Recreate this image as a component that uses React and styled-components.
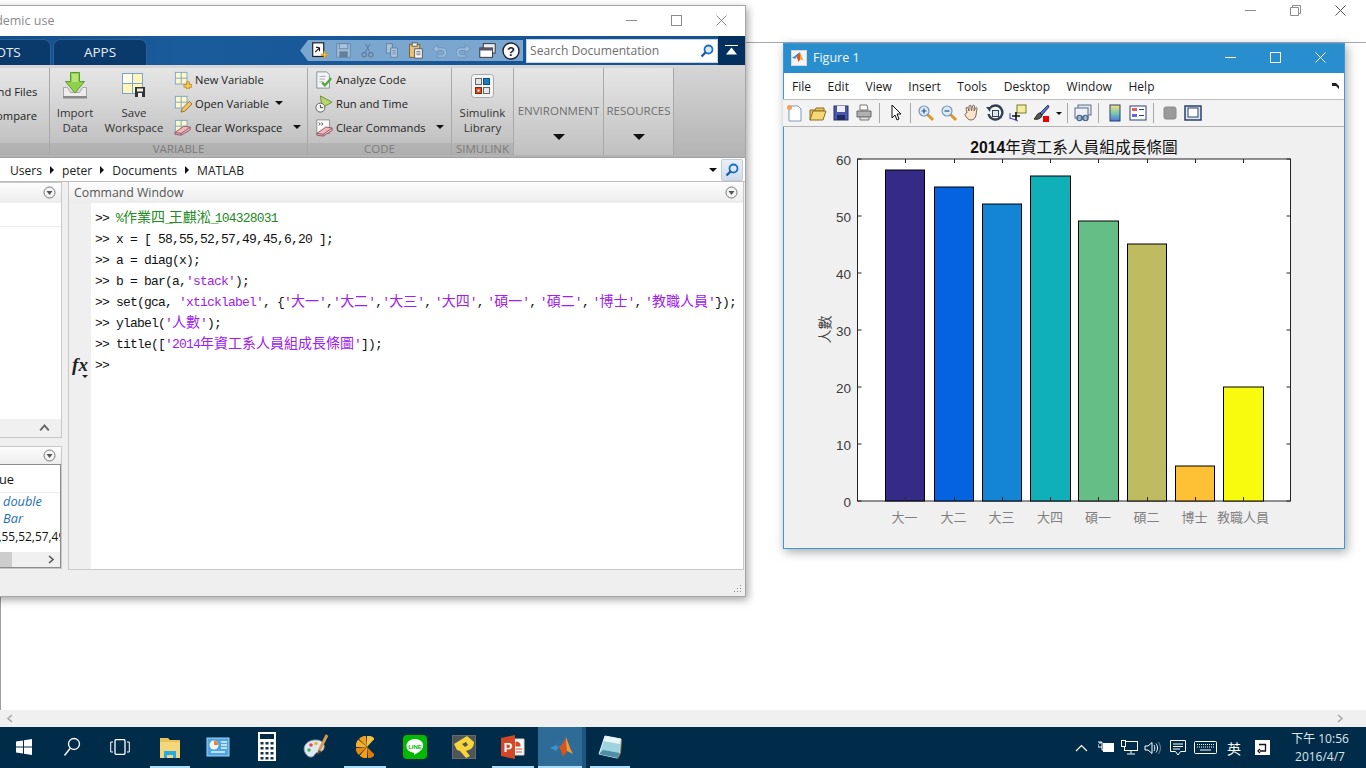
import styled, { createGlobalStyle } from 'styled-components';

const UI = `"Open Sans", "Noto Sans CJK TC", sans-serif`;
const CJK = `"Noto Sans CJK TC", sans-serif`;

const Global = createGlobalStyle`
	html, body {
		margin: 0;
		padding: 0;
		overflow: hidden;
		background: #fff;
		font-family: ${UI};
	}
`;

/* desktop behind everything */
const Page = styled.div`
	position: relative;
	width: 1366px;
	height: 768px;
	overflow: hidden;
	display: flex;
	flex-direction: column;
`;
const BackWindow = styled.div`
	flex: 1;
	display: flex;
	flex-direction: column;
	min-height: 0;
`;
const BackTitle = styled.div`
	height: 43px;
	box-sizing: border-box;
	border-bottom: 1px solid #a8a8a8;
	display: flex;
	justify-content: flex-end;
	padding-right: 3px;
`;
const BackBody = styled.div`
	flex: 1;
	border-left: 1px solid #a0a0a0;
`;
const HScroll = styled.div`
	height: 17px;
	background: #f0f0f0;
	display: flex;
	justify-content: space-between;
	align-items: center;
	padding: 0 22px 0 6px;
	color: #a8a8a8;
`;
const Taskbar = styled.div`
	height: 41px;
	background: #002c4a;
	display: flex;
	align-items: stretch;
	color: #fff;
`;
const TaskItem = styled.div`
	width: ${(p) => p.$w || 48}px;
	margin-right: ${(p) => p.$mr || 0}px;
	display: flex;
	align-items: center;
	justify-content: center;
	position: relative;
	background: ${(p) => (p.$active ? 'linear-gradient(90deg, #2f6b97 44px, #1f5680 44px)' : 'transparent')};
	box-sizing: border-box;
	padding-bottom: 2px;

	&::after {
		content: '';
		display: ${(p) => (p.$running ? 'block' : 'none')};
		position: absolute;
		bottom: 0;
		height: 2px;
		left: ${(p) => (p.$active ? 0 : 4)}px;
		right: 4px;
		background: #a9dcf6;
	}
`;
const Tray = styled.div`
	margin-left: auto;
	display: flex;
	align-items: center;
	padding-right: 17px;
`;
const TraySlot = styled.div`
	width: ${(p) => p.$w}px;
	display: flex;
	justify-content: center;
	align-items: center;
	font-family: ${CJK};
	font-size: 14px;
`;
const Clock = styled.div`
	width: 58px;
	text-align: center;
	font-size: 12px;
	line-height: 18px;
	margin-left: 16px;
	color: #dfe6ea;
	white-space: nowrap;
	font-family: "Open Sans", ${CJK};
`;

/* shared window chrome */
const WinBtn = styled.div`
	width: 45px;
	height: ${(p) => p.$h || 30}px;
	display: flex;
	align-items: center;
	justify-content: center;
`;

/* MATLAB desktop */
const MatlabWindow = styled.div`
	position: absolute;
	left: -200px;
	top: 5px;
	width: 946px;
	height: 592px;
	box-sizing: border-box;
	border: 1px solid #a6a6a6;
	background: #efefef;
	box-shadow: 2px 3px 8px rgba(0, 0, 0, 0.35);
	display: flex;
	flex-direction: column;
`;
const TitleBar = styled.div`
	height: 30px;
	box-sizing: border-box;
	padding: 0 1px 2px 0;
	background: #fff;
	display: flex;
	align-items: center;
	flex-shrink: 0;
`;
const TitleText = styled.div`
	margin-left: 68px;
	font-size: 12.5px;
	color: #8b8b8b;
	margin-right: auto;
	white-space: nowrap;
`;
const Strip = styled.div`
	height: 29px;
	flex-shrink: 0;
	display: flex;
	align-items: flex-end;
	padding-left: 149px;
	background: linear-gradient(100deg, #0c4278 0%, #1a5b9c 40%, #14528f 100%);
`;
const Tab = styled.div`
	width: ${(p) => p.$w}px;
	height: 26px;
	margin-right: 2px;
	box-sizing: border-box;
	padding-bottom: 2px;
	border: 1px solid #2c6197;
	border-bottom: none;
	border-radius: 7px 7px 0 0;
	background: #0a3a6c;
	color: #e6eef6;
	font-size: 13.5px;
	display: flex;
	align-items: center;
	justify-content: center;
`;
const Quick = styled.div`
	margin-left: auto;
	width: 223px;
	height: 21px;
	align-self: center;
	background: #7ba6cf;
	clip-path: polygon(8px 0, 100% 0, 100% 100%, 8px 100%, 0 50%);
	display: flex;
	align-items: center;
	padding-left: 7px;
	box-sizing: border-box;
`;
const QuickBtn = styled.div`
	width: 24px;
	display: flex;
	justify-content: center;
	opacity: ${(p) => (p.$off ? 0.38 : 1)};
`;
const SearchBox = styled.div`
	width: 192px;
	height: 24px;
	align-self: center;
	margin-left: 3px;
	background: #fff;
	border: 1px solid #c8d6e4;
	box-sizing: border-box;
	display: flex;
	align-items: center;
	justify-content: space-between;
	padding: 0 3px 0 3px;
	font-size: 12.1px;
	color: #6e6e6e;
	white-space: nowrap;
`;
const Collapse = styled.div`
	width: 27px;
	align-self: stretch;
	background: #03305f;
	display: flex;
	align-items: center;
	justify-content: center;
`;
const Ribbon = styled.div`
	height: 93px;
	flex-shrink: 0;
	display: flex;
	background: linear-gradient(#d6d6d6, #b3b3b3);
	border-bottom: 1px solid #a0a0a0;
	box-sizing: border-box;
`;
const Section = styled.div`
	width: ${(p) => p.$w}px;
	box-sizing: border-box;
	border-right: 1px solid #a8a8a8;
	margin-top: 3px;
	margin-bottom: 2px;
	display: flex;
	flex-direction: column;
	background: linear-gradient(#e6e6e6, #bcbcbc);
`;
const SectionBody = styled.div`
	height: 75px;
	display: flex;
	padding-left: ${(p) => p.$pl || 0}px;
	padding-top: ${(p) => p.$pt || 0}px;
	box-sizing: border-box;
`;
const SectionLabel = styled.div`
	height: 12px;
	background: rgba(0, 0, 0, 0.07);
	text-align: center;
	color: #7c7c7c;
	font-size: 11.5px;
	line-height: 12px;
	white-space: nowrap;
`;
const BigBtn = styled.div`
	width: ${(p) => p.$w}px;
	display: flex;
	flex-direction: column;
	align-items: center;
	font-size: 11.5px;
	line-height: 15px;
	color: #333;
	text-align: center;
	white-space: nowrap;
`;
const BigIcon = styled.div`
	height: 33px;
	margin-bottom: 3px;
	margin-top: 1px;
	display: flex;
	align-items: center;
`;
const RowList = styled.div`
	display: flex;
	flex-direction: column;
	margin-left: ${(p) => p.$ml || 0}px;
	margin-top: -1px;
`;
const RibbonRow = styled.div`
	height: 24px;
	display: flex;
	align-items: center;
	font-size: 11.2px;
	color: #222;
	white-space: nowrap;
`;
const RowIcon = styled.div`
	width: 21px;
	display: flex;
	flex-shrink: 0;
	margin-top: 1px;
`;
const Caret = styled.span`
	display: inline-block;
	width: 0;
	height: 0;
	margin-left: ${(p) => (p.$auto ? 'auto' : `${p.$ml || 0}px`)};
	border-left: ${(p) => p.$s || 4}px solid transparent;
	border-right: ${(p) => p.$s || 4}px solid transparent;
	border-top: ${(p) => p.$s || 4}px solid #111;
`;
const MenuSection = styled.div`
	width: ${(p) => p.$w}px;
	box-sizing: border-box;
	border-right: 1px solid #a8a8a8;
	margin: 3px 0 2px;
	padding-top: 35px;
	display: flex;
	flex-direction: column;
	align-items: center;
	gap: 16px;
	font-size: 11.5px;
	line-height: 15px;
	color: #6f6f6f;
	white-space: nowrap;
	background: linear-gradient(#e6e6e6, #c0c0c0);
`;
const PathBar = styled.div`
	height: 24px;
	flex-shrink: 0;
	background: #fff;
	border-bottom: 1px solid #bdbdbd;
	box-sizing: border-box;
	display: flex;
	align-items: center;
	padding-left: 209px;
	padding-right: 2px;
	font-size: 12.1px;
	color: #222;
`;
const PathText = styled.span`
	position: relative;
	top: 1px;
`;
const PathArrow = styled.span`
	width: 0;
	height: 0;
	margin: 0 8px;
	border-top: 4px solid transparent;
	border-bottom: 4px solid transparent;
	border-left: 4px solid #111;
`;
const PathSearch = styled.div`
	width: 22px;
	height: 22px;
	box-sizing: border-box;
	margin-left: 4px;
	border: 1px solid #c4ccd6;
	border-radius: 2px;
	background: linear-gradient(#e9eff8, #cfdcee);
	display: flex;
	align-items: center;
	justify-content: center;
`;
const Desk = styled.div`
	height: 388px;
	flex-shrink: 0;
	display: flex;
	gap: 6px;
	padding-right: 1px;
`;
const LeftColumn = styled.div`
	width: 261px;
	display: flex;
	flex-direction: column;
	gap: 8px;
`;
const Panel = styled.div`
	flex: none;
	display: flex;
	flex-direction: column;
	border: 1px solid #c8c8c8;
	border-left: none;
	box-sizing: border-box;
	height: ${(p) => p.$h}px;
`;
const PanelHead = styled.div`
	height: ${(p) => p.$h || 20}px;
	flex-shrink: 0;
	background: linear-gradient(#fdfdfd, #ececec);
	display: flex;
	align-items: center;
	justify-content: space-between;
	padding: 0 5px 1px 5px;
	box-sizing: border-box;
	font-size: 12.3px;
	color: #555;
`;
const FolderList = styled.div`
	flex: 1;
	background: #fff;
	display: flex;
	flex-direction: column;
`;
const ListHead = styled.div`
	height: 23px;
	border-bottom: 1px solid #ececec;
`;
const ScrollEnd = styled.div`
	height: 18px;
	background: #f0f0f0;
	display: flex;
	justify-content: flex-end;
	align-items: center;
	padding-right: 11px;
`;
const VarTable = styled.div`
	flex: 1;
	background: #fff;
	border: 1px solid #8c8c8c;
	border-left: none;
	display: flex;
	flex-direction: column;
	overflow: hidden;
	font-size: 12.8px;
	color: #111;
`;
const VarHead = styled.div`
	height: 28px;
	box-sizing: border-box;
	border-bottom: 1px solid #ececec;
	padding-left: 180px;
	line-height: 29px;
`;
const VarRow = styled.div`
	height: 17.3px;
	line-height: 17.3px;
	padding-left: ${(p) => p.$pl}px;
	white-space: nowrap;
	font-size: ${(p) => p.$fs || 12.8}px;
	font-style: ${(p) => (p.$italic ? 'italic' : 'normal')};
	color: ${(p) => (p.$italic ? '#1f6fb5' : '#111')};
`;
const VarScroll = styled.div`
	margin-top: auto;
	height: 15px;
	background: #f0f0f0;
	display: flex;
	align-items: center;
	justify-content: space-between;
	padding-right: 5px;
`;
const VarThumb = styled.div`
	width: 211px;
	height: 100%;
	background: #cdcdcd;
`;
const CommandPanel = styled.div`
	flex: 1;
	display: flex;
	flex-direction: column;
	border: 1px solid #c8c8c8;
	border-top: none;
	min-width: 0;
`;
const CommandBody = styled.div`
	flex: 1;
	display: flex;
	min-height: 0;
`;
const Gutter = styled.div`
	width: 22px;
	flex-shrink: 0;
	background: #efefef;
	padding-top: 151px;
	box-sizing: border-box;
	display: flex;
	flex-direction: column;
	align-items: center;
`;
const FxMark = styled.div`
	font-family: "Liberation Serif", serif;
	font-style: italic;
	font-weight: bold;
	font-size: 19px;
	line-height: 22px;
	color: #222;
	position: relative;
`;
const FxCaret = styled.span`
	position: absolute;
	right: 0;
	bottom: -2px;
	width: 0;
	height: 0;
	border-left: 3px solid transparent;
	border-right: 3px solid transparent;
	border-top: 3px solid #222;
`;
const Console = styled.div`
	flex: 1;
	background: #fff;
	padding: 5px 0 0 4px;
	font-family: "Liberation Mono", monospace;
	font-size: 13px;
	letter-spacing: -0.8px;
	color: #111;
	white-space: pre;
	overflow: hidden;
`;
const Line = styled.div`
	height: 21px;
	line-height: 21px;
`;
const Str = styled.span`
	color: #a020f0;
`;
const Comment = styled.span`
	color: #228b22;
`;
const Han = styled.span`
	font-family: ${CJK};
	font-size: 14px;
	letter-spacing: 0;
	line-height: 14px;
`;
/* double-width runs sit tighter around their separators in the console */
const Tight = styled.span`
	letter-spacing: ${(p) => p.$by || -4.3}px;
`;
const StatusBar = styled.div`
	flex: 1;
	display: flex;
	justify-content: flex-end;
	align-items: flex-end;
	padding: 0 3px 2px 0;
`;

/* figure window */
const FigureWindow = styled.div`
	position: absolute;
	left: 783px;
	top: 43px;
	width: 562px;
	height: 506px;
	box-sizing: border-box;
	border: 1px solid #3a9ad9;
	background: #f0f0f0;
	box-shadow: 2px 3px 10px rgba(0, 0, 0, 0.35);
	display: flex;
	flex-direction: column;
`;
const FigTitle = styled.div`
	height: 29px;
	flex-shrink: 0;
	box-sizing: border-box;
	padding-bottom: 2px;
	background: #288ecd;
	color: #f2f8fc;
	display: flex;
	align-items: center;
	font-size: 12.5px;
`;
const FigIcon = styled.div`
	width: 14px;
	height: 14px;
	margin: 0 6px 0 7px;
	background: #f4f4f4;
	display: flex;
	border: 1px solid #d8d8d8;
`;
const FigButtons = styled.div`
	margin-left: auto;
	display: flex;
	margin-right: 1px;
`;
const MenuBar = styled.div`
	height: 26px;
	flex-shrink: 0;
	background: #fff;
	display: flex;
	align-items: center;
	gap: 16.6px;
	padding: 0 4px 0 8px;
	font-size: 12px;
	color: #1a1a1a;
`;
const MenuEnd = styled.div`
	margin-left: auto;
	display: flex;
`;
const FigTools = styled.div`
	height: 28px;
	flex-shrink: 0;
	box-sizing: border-box;
	background: #f3f3f3;
	border-top: 1px solid #bdbdbd;
	border-bottom: 1px solid #b4b4b4;
	display: flex;
	align-items: center;
	margin-left: -1px;
`;
const ToolBtn = styled.div`
	width: 23px;
	display: flex;
	justify-content: center;
`;
const ToolSep = styled.div`
	width: 1px;
	height: 20px;
	margin: 0 ${(p) => p.$r ?? 4}px 0 ${(p) => p.$l ?? 4}px;
	background: #a8a8a8;
`;
const ChartSvg = styled.svg`
	display: block;
	flex: 1;
	width: 100%;
	min-height: 0;
`;

/* ---------- icons ---------- */
const S = ({ s = 18, v = 20, children }) => (
	<svg width={s} height={s} viewBox={`0 0 ${v} ${v}`} style={{ display: 'block' }}>
		{children}
	</svg>
);
const Grid = () => (
	<g>
		<rect x="1.5" y="1.5" width="13" height="13" fill="#fdf6c5" stroke="#7ba3cb" />
		<path d="M8 1.5v13M1.5 8h13" stroke="#7ba3cb" fill="none" />
	</g>
);
const Eraser = ({ x = 0, y = 0 }) => (
	<g transform={`translate(${x} ${y})`}>
		<path d="M1 15l10-7 7 1 0 3-10 6-7-1z" fill="#f0b8bd" stroke="#8a5560" />
		<path d="M1 15l7 1 10-7M8 16v2" fill="none" stroke="#8a5560" />
	</g>
);
const NewVar = () => (
	<S>
		<Grid />
		<path d="M11 15h3v-3h3v3h3v3h-3v2h-3v-2h-3z" fill="#f5c94c" stroke="#b07f1d" strokeWidth=".8" />
	</S>
);
const OpenVar = () => (
	<S>
		<Grid />
		<path d="M8 19l1-4 8-8 3 3-8 8z" fill="#f2c26a" stroke="#8b6a2d" />
	</S>
);
const ClearVar = () => (
	<S>
		<Grid />
		<Eraser />
	</S>
);
const Analyze = () => (
	<S>
		<path d="M2 1h11l3 3v15H2z" fill="#f4f4f4" stroke="#7e8b93" />
		<path d="M5 6h7M5 9h6M5 12h4" stroke="#a0aab0" />
		<path d="M8 13l3 3 7-8" fill="none" stroke="#57a33c" strokeWidth="2.6" />
	</S>
);
const RunTime = () => (
	<S>
		<path d="M6 1l13 7-11 6z" fill="#b9d56b" stroke="#668a2d" />
		<circle cx="6" cy="14" r="5" fill="#f4f4f4" stroke="#555" />
		<path d="M6 11v3h3" fill="none" stroke="#333" />
	</S>
);
const ClearCmd = () => (
	<S>
		<rect x="2" y="1" width="14" height="15" fill="#fafafa" stroke="#8c8c8c" />
		<path d="M4 4l2 1.5L4 7M7 4l2 1.5L7 7" fill="none" stroke="#333" strokeWidth=".8" />
		<Eraser x="1" y="1" />
	</S>
);
const ImportIcon = () => (
	<svg width="24" height="27" viewBox="0 0 24 27">
		<path d="M.5 15.5h4l3 5h9l3-5h4v10h-23z" fill="#ececec" stroke="#a8a8a8" />
		<rect x="0" y="24" width="24" height="2.5" fill="#8a8a8a" />
		<path d="M7.5.5h9v9h5L12 21 2.5 9.5h5z" fill="#8fd14a" stroke="#5c9a28" />
		<rect x="9" y="2" width="6" height="8" fill="#b6e57c" />
	</svg>
);
const SaveIcon = () => (
	<svg width="24" height="25" viewBox="0 0 24 25">
		<rect x=".5" y=".5" width="20" height="20" fill="#fdf6bf" stroke="#7ba3cb" />
		<rect x="1" y="1" width="9" height="9" fill="#fffde8" />
		<path d="M10.5.5v20M.5 10.5h20" stroke="#7ba3cb" />
		<rect x="13" y="14" width="10" height="10" fill="#333" />
		<rect x="15" y="15.5" width="6" height="3" fill="#eee" />
		<rect x="16" y="20" width="4" height="4" fill="#eee" />
	</svg>
);
const SimulinkIcon = () => (
	<svg width="23" height="24" viewBox="0 0 23 24">
		<rect x=".5" y=".5" width="22" height="23" rx="3" fill="#f4f4f4" stroke="#a9a9a9" />
		<rect x="4.5" y="4.5" width="6" height="6" fill="#e4e4e4" stroke="#666" />
		<rect x="12.5" y="4.5" width="6" height="6" fill="#1c7cc0" stroke="#0d4f80" />
		<rect x="4.5" y="13.5" width="6" height="6" fill="#d8481f" stroke="#7d2a10" />
		<rect x="12.5" y="13.5" width="6" height="6" fill="#e8e8e8" stroke="#666" />
		<rect x="6.5" y="15.5" width="2" height="2" fill="#fff" />
	</svg>
);
const Magnifier = ({ s = 14 }) => (
	<svg width={s} height={s} viewBox="0 0 14 14">
		<circle cx="8.5" cy="5.5" r="4" fill="#dbeaf8" stroke="#1c6ec0" strokeWidth="1.8" />
		<path d="M5.5 8.5L1.5 12.5" stroke="#1c5ea6" strokeWidth="2.4" />
	</svg>
);
const PanelArrow = () => (
	<svg width="13" height="13" viewBox="0 0 13 13">
		<circle cx="6.5" cy="6.5" r="5.5" fill="#f4f4f4" stroke="#777" />
		<path d="M3.5 5h6l-3 4z" fill="#555" />
	</svg>
);
const CloseGlyph = ({ c }) => (
	<svg width="11" height="11" viewBox="0 0 11 11">
		<path d="M.5.5l10 10M10.5.5l-10 10" stroke={c} fill="none" />
	</svg>
);
const MaxGlyph = ({ c }) => (
	<svg width="11" height="11" viewBox="0 0 11 11">
		<rect x=".5" y=".5" width="10" height="10" stroke={c} fill="none" />
	</svg>
);
const MinGlyph = ({ c }) => (
	<svg width="11" height="11" viewBox="0 0 11 11">
		<path d="M0 5.5h11" stroke={c} fill="none" />
	</svg>
);
const RestoreGlyph = ({ c }) => (
	<svg width="11" height="11" viewBox="0 0 11 11">
		<path d="M.5 2.5h8v8h-8zM2.5 2.5v-2h8v8h-2" stroke={c} fill="none" />
	</svg>
);
const Chevron = ({ d, c = '#a8a8a8', s = 9 }) => (
	<svg width={s} height={s} viewBox="0 0 9 9">
		<path d={d} stroke={c} strokeWidth="1.6" fill="none" />
	</svg>
);
const MatlabPeak = ({ s = 24 }) => (
	<svg width={s} height={s} viewBox="0 0 24 24">
		<path d="M0 13l6-3 3 2-3 4z" fill="#3d8fd0" />
		<path d="M6 10l3 2 4-4 3-6-5 4z" fill="#2c6fa8" />
		<path d="M9 12c2 3 3 7 4 10l4-6c-1-5-1-10-1-14-2 5-4 8-7 10z" fill="#d8541e" />
		<path d="M16 2c2 5 4 12 7 17-2-1-4-2-6-3-1-5-1-10-1-14z" fill="#f29a2b" />
	</svg>
);
const QuickNew = () => (
	<S s={17}>
		<rect x="2" y="1" width="13" height="16" fill="#fff" stroke="#222" strokeWidth="1.4" />
		<path d="M5 12l5-5M6 6l4 1 0 4" stroke="#111" strokeWidth="1.3" fill="none" />
		<path d="M12 14h3v-3h2v3h3v2h-3v3h-2v-3h-3z" fill="#f5c94c" stroke="#b07f1d" strokeWidth=".6" />
	</S>
);
const QuickSave = () => (
	<S s={17}>
		<path d="M2 2h16v16H2z" fill="#dfe6ee" stroke="#3a4450" />
		<rect x="5" y="2" width="10" height="6" fill="#f4f4f4" stroke="#3a4450" />
		<rect x="5" y="11" width="10" height="7" fill="#3a4450" />
	</S>
);
const QuickCut = () => (
	<S s={17}>
		<circle cx="6" cy="15" r="2.6" fill="none" stroke="#334" strokeWidth="1.3" />
		<circle cx="14" cy="15" r="2.6" fill="none" stroke="#334" strokeWidth="1.3" />
		<path d="M7 13l6-11M13 13L8 2" stroke="#334" strokeWidth="1.1" />
	</S>
);
const QuickCopy = () => (
	<S s={17}>
		<path d="M4 2h7v11H4z" fill="#eee" stroke="#334" />
		<path d="M9 7h8v11H9z" fill="#f6f6f6" stroke="#334" />
		<path d="M11 10h4M11 12h4M11 14h4" stroke="#667" />
	</S>
);
const QuickPaste = () => (
	<S s={17}>
		<rect x="3" y="3" width="12" height="15" fill="#e8c27a" stroke="#7a5a20" />
		<rect x="6" y="1" width="6" height="4" fill="#eee" stroke="#555" />
		<path d="M9 8h9v11H9z" fill="#fff" stroke="#444" />
		<path d="M11 11h5M11 13h5M11 15h5" stroke="#667" />
	</S>
);
const QuickUndo = ({ flip }) => (
	<S s={17}>
		<g transform={flip ? 'translate(20 0) scale(-1 1)' : undefined}>
			<path d="M8 3L2 8l6 5v-3h5c3 0 3 5 0 5H7v3h7c6 0 6-11 0-11H8z" fill="#cfdded" stroke="#4d6b8a" />
		</g>
	</S>
);
const QuickWindows = () => (
	<S s={17}>
		<rect x="5" y="2" width="14" height="11" fill="#eee" stroke="#222" />
		<rect x="1" y="7" width="15" height="11" fill="#fff" stroke="#222" />
		<rect x="1" y="7" width="15" height="3" fill="#556" />
	</S>
);
const QuickHelp = () => (
	<svg width="18" height="18" viewBox="0 0 18 18">
		<circle cx="9" cy="9" r="8" fill="#fff" stroke="#223" strokeWidth="1.4" />
		<text x="9" y="13.5" textAnchor="middle" fontSize="13" fontWeight="bold" fontFamily="Liberation Sans" fill="#223">?</text>
	</svg>
);

/* figure toolbar */
const T = ({ children }) => (
	<svg width="18" height="18" viewBox="0 0 18 18" style={{ display: 'block' }}>
		{children}
	</svg>
);
const Lens = ({ sign }) => (
	<T>
		<path d="M10 10l6 6" stroke="#d89a2a" strokeWidth="3" />
		<circle cx="7" cy="7" r="5" fill="#dcebfa" stroke="#7a96b8" strokeWidth="1.2" />
		<path d={sign === '+' ? 'M4.5 7h5M7 4.5v5' : 'M4.5 7h5'} stroke="#24507f" strokeWidth="1.2" />
	</T>
);
const FigTool = {
	New: () => (
		<T>
			<path d="M3 2h9l3 3v12H3z" fill="#fff" stroke="#7a9bc0" />
			<circle cx="3.5" cy="3.5" r="2.5" fill="#f0a050" />
		</T>
	),
	Open: () => (
		<T>
			<path d="M1 6h5l1-2h8v3H5L2 16H1z" fill="#e8c45a" stroke="#8c6d1f" />
			<path d="M4 7h13l-3 9H1z" fill="#f3d877" stroke="#8c6d1f" />
		</T>
	),
	Save: () => (
		<T>
			<rect x="2" y="2" width="14" height="14" fill="#4858ab" stroke="#28306b" />
			<rect x="5" y="2" width="8" height="6" fill="#eef" />
			<rect x="5" y="11" width="8" height="5" fill="#222a60" />
		</T>
	),
	Print: () => (
		<T>
			<path d="M5 1h7l1 5H5z" fill="#fff" stroke="#777" />
			<path d="M2 7h14v6H2z" fill="#b0b0b0" stroke="#666" />
			<path d="M5 13h9v3H5z" fill="#e0e0e0" stroke="#777" />
		</T>
	),
	Pointer: () => (
		<T>
			<path d="M5 1v13l3-3 2 5 2-1-2-5h4z" fill="#fff" stroke="#111" />
		</T>
	),
	Hand: () => (
		<T>
			<path d="M4 9L3 4c0-1 2-1 2 0l1 3 0-5c0-1 2-1 2 0l.5 5L9.5 2c0-1 2-1 2 0l-.5 5 1.5-3c.5-1 2-.5 1.5.5L13 11c-.5 3-2 5-5 5s-4-2-6-5c-.5-1 1-2 2-2z" fill="#fbe3cc" stroke="#7a6a5c" />
		</T>
	),
	Rotate: () => (
		<T>
			<path d="M4 4a7 7 0 11-1.5 6" fill="none" stroke="#333f52" strokeWidth="2.4" />
			<rect x="6.5" y="6.5" width="6" height="6" fill="#dfe8f2" stroke="#333f52" />
			<path d="M0 3l5 0-1 5z" fill="#333f52" />
		</T>
	),
	Cursor: () => (
		<T>
			<rect x="8" y="1" width="9" height="8" fill="#f2eda0" stroke="#7a7a30" />
			<path d="M1 9v6M1 14l8 3" stroke="#2a3fd0" fill="none" />
			<path d="M7 8v8M3 12h8" stroke="#111" strokeWidth="1.6" />
		</T>
	),
	Brush: () => (
		<T>
			<path d="M16 1L8 9l2 2 7-8z" fill="#5672c0" stroke="#2a3f80" />
			<path d="M8 9c-3 0-3 3-6 6 4 1 8-1 8-4z" fill="#555" stroke="#222" />
			<rect x="11" y="12" width="6" height="6" fill="#ee0000" />
		</T>
	),
	Link: () => (
		<T>
			<rect x="4" y="1" width="13" height="10" fill="#dde5ee" stroke="#5c6f85" />
			<rect x="1" y="4" width="13" height="10" fill="#eef2f6" stroke="#5c6f85" />
			<path d="M3 14a2.5 2.5 0 015 0 2.5 2.5 0 01-5 0M9 14a2.5 2.5 0 015 0 2.5 2.5 0 01-5 0" fill="none" stroke="#4a6b94" strokeWidth="1.4" />
		</T>
	),
	Colorbar: () => (
		<T>
			<defs>
				<linearGradient id="cb" x1="0" y1="0" x2="0" y2="1">
					<stop offset="0" stopColor="#f6e27a" />
					<stop offset=".5" stopColor="#7ec7b0" />
					<stop offset="1" stopColor="#4a78d8" />
				</linearGradient>
			</defs>
			<rect x="4" y="1" width="10" height="16" fill="url(#cb)" stroke="#2c3f6b" />
		</T>
	),
	Legend: () => (
		<T>
			<rect x="1" y="2" width="16" height="14" fill="#fff" stroke="#2c3f6b" />
			<rect x="3" y="4" width="5" height="3" fill="#e65a5a" />
			<rect x="3" y="10" width="5" height="3" fill="#5a6ae6" />
			<path d="M10 5.5h5M10 11.5h5" stroke="#2c3f6b" />
		</T>
	),
	Plain: () => (
		<T>
			<rect x="3" y="3" width="12" height="12" rx="2" fill="#9a9a9a" stroke="#8a8a8a" />
		</T>
	),
	Tile: () => (
		<T>
			<rect x="1" y="2" width="16" height="14" fill="#dfe8f2" stroke="#2c3f6b" strokeWidth="1.5" />
			<rect x="4" y="4" width="10" height="9" fill="#fff" stroke="#2c3f6b" />
		</T>
	),
};

/* taskbar */
const B = ({ children, w = 24, h = 24 }) => (
	<svg width={w} height={h} viewBox={`0 0 ${w} ${h}`} style={{ display: 'block' }}>
		{children}
	</svg>
);
const wedge = (a, b) => {
	const r = 11.5;
	const cx = 12;
	const cy = 11;
	const p = (t) => `${(cx + r * Math.cos((t * Math.PI) / 180)).toFixed(1)} ${(cy + r * Math.sin((t * Math.PI) / 180)).toFixed(1)}`;
	return `M${cx} ${cy}L${p(a)}A${r} ${r} 0 0 1 ${p(b)}z`;
};
const FAN = [
	[45, 85, '#d97b0e'],
	[90, 130, '#f2a01e'],
	[135, 175, '#e88a12'],
	[180, 220, '#f7b02c'],
	[225, 265, '#f0a020'],
	[270, 312, '#f5c04a'],
];
const TaskIcon = {
	Start: () => (
		<B w={16} h={16}>
			<path d="M0 2.5l7-1v6H0zM8 1.3L16 0v7.5H8zM0 8.5h7v6l-7-1zM8 8.5h8V16l-8-1.2z" fill="#fff" />
		</B>
	),
	Search: () => (
		<B w={18} h={20}>
			<circle cx="11" cy="7" r="5.5" fill="none" stroke="#fff" strokeWidth="1.3" />
			<path d="M7 11.5L1.5 18.5" stroke="#fff" strokeWidth="1.4" />
		</B>
	),
	View: () => (
		<B w={20} h={16}>
			<rect x="5" y=".7" width="10" height="14.6" rx="1" fill="none" stroke="#fff" strokeWidth="1.3" />
			<path d="M3 3H.7v10H3M17 3h2.3v10H17" fill="none" stroke="#fff" />
		</B>
	),
	Folder: () => (
		<B>
			<path d="M2 3h8l2 2h10v18H2z" fill="#e9c25a" />
			<rect x="2" y="7" width="20" height="16" fill="#f4d67c" />
			<path d="M6 23v-7h12v7h-3v-3H9v3z" fill="#29a8e6" />
		</B>
	),
	Panel: () => (
		<B>
			<rect x="1" y="3" width="22" height="18" fill="#4ea6e6" stroke="#a5d4f4" />
			<circle cx="8" cy="10" r="4.5" fill="#f4f4f4" />
			<path d="M8 10V5.5a4.5 4.5 0 014.5 4.5z" fill="#e8862a" />
			<path d="M15 7h6M15 10h6M15 13h6M5 17h14" stroke="#e6f3fc" strokeWidth="1.4" />
		</B>
	),
	Calc: () => (
		<B w={18} h={29}>
			<rect width="18" height="29" fill="#fff" />
			<rect x="2" y="2" width="14" height="5" fill="#002c4a" />
			{[10, 15, 20, 25].map((y) => (
				<path key={y} d={`M2.5 ${y}h3v2.5h-3zM7.5 ${y}h3v2.5h-3zM12.5 ${y}h3v2.5h-3z`} fill="#12344e" />
			))}
		</B>
	),
	Paint: () => (
		<B w={26} h={28}>
			<path d="M3 21C-2 14 4 7 13 7c7 0 10 6 7 10-3 3-6 1-8 4-2 4-6 4-9 0z" fill="#dfe9f2" stroke="#98a9b8" />
			<circle cx="8" cy="12" r="1.8" fill="#e24b3b" />
			<circle cx="13" cy="10.5" r="1.8" fill="#f0b42c" />
			<circle cx="6" cy="17" r="1.8" fill="#4caf50" />
			<path d="M16 18L24 2" stroke="#d99a54" strokeWidth="3" />
			<path d="M14 22l1.5-5 3 1.5z" fill="#6d4a2a" />
		</B>
	),
	Fan: () => (
		<B w={18} h={22}>
			{FAN.map(([a, b, c]) => (
				<path key={a} d={wedge(a, b)} fill={c} transform="translate(-1 0)" />
			))}
		</B>
	),
	Line: () => (
		<B>
			<rect width="24" height="24" rx="4" fill="#00b900" />
			<path d="M12 4C7 4 3.5 7 3.5 11c0 3.5 2.5 6 7 6.7 1 .2.8 1 .6 2.3 2.5-1.2 6-3.8 7.5-5.5 1-1.200 1.500-2.300 1.500-3.500C20.500 7 17 4 12 4z" fill="#fff" />
			<text x="12" y="13.5" textAnchor="middle" fontSize="6" fontWeight="bold" fontFamily="Liberation Sans" fill="#00b900">LINE</text>
		</B>
	),
	Gem: () => (
		<B>
			<rect width="24" height="24" rx="2" fill="#4f5456" stroke="#7a7f82" />
			<path d="M2 9L15 1l7 6c0 3-1 5-3 7l-5 2 4 5-4 2-6-7-3-1z" fill="#f7d53a" />
			<path d="M10 9l4-2 2 3-3 2z" fill="#4f5456" />
		</B>
	),
	Ppt: () => (
		<B>
			<path d="M8 4h15v16H8z" fill="#fff" stroke="#d0d0d0" />
			<path d="M15 7c3 0 4 2 4 4h-4zM15 14h6M15 17h6" fill="#d24726" stroke="#d24726" strokeWidth="1.2" />
			<path d="M0 3l14-3v24L0 21z" fill="#d24726" />
			<text x="7" y="17" textAnchor="middle" fontSize="13" fontWeight="bold" fontFamily="Liberation Sans" fill="#fff">P</text>
		</B>
	),
	Notepad: () => (
		<B>
			<path d="M7 1l16 3-1 14-3 5L1 19z" fill="#9ed3e0" stroke="#dff3f8" />
			<path d="M7 1l16 3-1 5L5 6z" fill="#e8f6fa" />
			<path d="M1 19l18 4 3-5-17-3z" fill="#4f8fa6" />
			<path d="M23 4l-1 14-3 5 1 1 3-6 1-14z" fill="#8a7a50" />
		</B>
	),
};
const TrayIcon = {
	Up: () => (
		<B w={13} h={8}>
			<path d="M1 7l5.5-5.500L12 7" fill="none" stroke="#fff" strokeWidth="1.2" />
		</B>
	),
	Battery: () => (
		<B w={17} h={13}>
			<rect x="5.5" y="2.5" width="10" height="8" fill="#fff" stroke="#fff" />
			<path d="M0 3v3h4M2 1v2M0 1h4v5" stroke="#fff" fill="none" />
			<path d="M4 6v3h2" stroke="#fff" fill="none" />
		</B>
	),
	Network: () => (
		<B w={17} h={15}>
			<rect x="3.5" y="1.5" width="13" height="9" fill="none" stroke="#fff" />
			<rect x=".5" y=".5" width="4" height="6" fill="#002c4a" stroke="#fff" />
			<path d="M10 10.5v3M6 14h8" stroke="#fff" />
		</B>
	),
	Volume: () => (
		<B w={17} h={14}>
			<path d="M1 5h3l4-3.500v11L4 9H1z" fill="none" stroke="#fff" />
			<path d="M10 4c1 2 1 4 0 6M12 2.500c2 3 2 6 0 9" fill="none" stroke="#fff" />
			<path d="M14.500 1c2.500 4 2.500 8 0 12" fill="none" stroke="#7a8b99" />
		</B>
	),
	Note: () => (
		<B w={16} h={16}>
			<path d="M.5.5h15v11h-5l-2.500 3.500L5.500 11.500h-5z" fill="none" stroke="#fff" />
			<path d="M3 4h10M3 6.500h10M3 9h7" stroke="#fff" />
		</B>
	),
	Keyboard: () => (
		<B w={23} h={13}>
			<rect x=".5" y=".5" width="22" height="12" rx="1" fill="none" stroke="#fff" />
			<path d="M3 3.500h17M3 6h17" stroke="#fff" strokeDasharray="1 1" />
			<path d="M6 9h11" stroke="#fff" />
		</B>
	),
	Ime: () => (
		<B w={15} h={15}>
			<rect width="15" height="15" fill="#fff" />
			<path d="M4 4.500h6.500v6.500H5M5 9l-2 2 2 2" fill="none" stroke="#111" strokeWidth="1.3" />
		</B>
	),
};

/* ---------- chart ---------- */
const BARS = [
	[885, 924, 58, '#352a87', '大一'],
	[934, 973, 55, '#0363e1', '大二'],
	[982, 1021, 52, '#1485d4', '大三'],
	[1030, 1070, 57, '#0fb0b8', '大四'],
	[1078, 1118, 49, '#65be85', '碩一'],
	[1127, 1166, 45, '#bebb60', '碩二'],
	[1175, 1214, 6, '#fec136', '博士'],
	[1223, 1263, 20, '#f9fb0e', '教職人員'],
];
const X0 = 857.5;
const X1 = 1290.5;
const Y0 = 501.5;
const Y1 = 159.5;
const yOf = (v) => Math.floor(501 - 5.7 * v) + 0.5;

const Chart = () => (
	<ChartSvg viewBox="784 128 560 420">
		<rect x={X0} y={Y1} width={X1 - X0} height={Y0 - Y1} fill="#fff" stroke="#262626" />
		{BARS.map(([a, b, v, c]) => (
			<rect key={a} x={a + 0.5} y={yOf(v)} width={b - a} height={Y0 - yOf(v)} fill={c} stroke="#000" />
		))}
		{BARS.map(([a, b]) => {
			const m = Math.round((a + b) / 2) + 0.5;
			return <path key={a} d={`M${m} ${Y0}v-4M${m} ${Y1}v4`} stroke="#262626" />;
		})}
		{[0, 10, 20, 30, 40, 50, 60].map((v) => (
			<g key={v}>
				<path d={`M${X0} ${yOf(v)}h4M${X1} ${yOf(v)}h-4`} stroke="#262626" />
				<text x="851" y={yOf(v) + 5.5} textAnchor="end" fontSize="13.5" fontFamily="Liberation Sans" fill="#3c3c3c">{v}</text>
			</g>
		))}
		{BARS.map(([a, b, , , t]) => (
			<text key={t} x={(a + b) / 2} y="522" textAnchor="middle" fontSize="13" fontFamily={CJK} fill="#808080">{t}</text>
		))}
		<text x="0" y="0" transform="translate(830 330) rotate(-90)" textAnchor="middle" fontSize="14" fontFamily={CJK} fill="#444">人數</text>
		<text x="1074" y="153" textAnchor="middle" fontSize="15.7" fontFamily={CJK} fill="#111">
			<tspan fontFamily="Liberation Sans" fontWeight="bold">2014</tspan>年資工系人員組成長條圖
		</text>
	</ChartSvg>
);

const App = () => {
	return (
		<Page>
			<Global />
			<BackWindow>
				<BackTitle>
					<WinBtn $h={20}><MinGlyph c="#8c8c8c" /></WinBtn>
					<WinBtn $h={20}><RestoreGlyph c="#8c8c8c" /></WinBtn>
					<WinBtn $h={20}><CloseGlyph c="#555" /></WinBtn>
				</BackTitle>
				<BackBody />
				<HScroll>
					<Chevron d="M6 1L2 4.5l4 3.5" />
					<Chevron d="M3 1l4 3.5L3 8" />
				</HScroll>
			</BackWindow>
			<Taskbar>
				<TaskItem><TaskIcon.Start /></TaskItem>
				<TaskItem><TaskIcon.Search /></TaskItem>
				<TaskItem $mr={2}><TaskIcon.View /></TaskItem>
				<TaskItem $running><TaskIcon.Folder /></TaskItem>
				<TaskItem><TaskIcon.Panel /></TaskItem>
				<TaskItem $w={49}><TaskIcon.Calc /></TaskItem>
				<TaskItem $w={49}><TaskIcon.Paint /></TaskItem>
				<TaskItem $w={50} $running><TaskIcon.Fan /></TaskItem>
				<TaskItem $w={49}><TaskIcon.Line /></TaskItem>
				<TaskItem $w={49}><TaskIcon.Gem /></TaskItem>
				<TaskItem $w={50} $running><TaskIcon.Ppt /></TaskItem>
				<TaskItem $w={48} $active $running><MatlabPeak /></TaskItem>
				<TaskItem $w={48} $running><TaskIcon.Notepad /></TaskItem>
				<Tray>
					<TraySlot $w={25}><TrayIcon.Up /></TraySlot>
					<TraySlot $w={24}><TrayIcon.Battery /></TraySlot>
					<TraySlot $w={23}><TrayIcon.Network /></TraySlot>
					<TraySlot $w={23}><TrayIcon.Volume /></TraySlot>
					<TraySlot $w={27}><TrayIcon.Note /></TraySlot>
					<TraySlot $w={28}><TrayIcon.Keyboard /></TraySlot>
					<TraySlot $w={30}>英</TraySlot>
					<TraySlot $w={26}><TrayIcon.Ime /></TraySlot>
					<Clock>
						下午 10:56
						<br />
						2016/4/7
					</Clock>
				</Tray>
			</Taskbar>

			<MatlabWindow>
				<TitleBar>
					<TitleText>MATLAB R2015b - academic use</TitleText>
					<WinBtn><MinGlyph c="#8c8c8c" /></WinBtn>
					<WinBtn><MaxGlyph c="#8c8c8c" /></WinBtn>
					<WinBtn><CloseGlyph c="#8c8c8c" /></WinBtn>
				</TitleBar>
				<Strip>
					<Tab $w={101}>PLOTS</Tab>
					<Tab $w={94}>APPS</Tab>
					<Quick>
						<QuickBtn><QuickNew /></QuickBtn>
						<QuickBtn $off><QuickSave /></QuickBtn>
						<QuickBtn $off><QuickCut /></QuickBtn>
						<QuickBtn $off><QuickCopy /></QuickBtn>
						<QuickBtn><QuickPaste /></QuickBtn>
						<QuickBtn $off><QuickUndo /></QuickBtn>
						<QuickBtn $off><QuickUndo flip /></QuickBtn>
						<QuickBtn><QuickWindows /></QuickBtn>
						<QuickBtn><QuickHelp /></QuickBtn>
					</Quick>
					<SearchBox>
						Search Documentation
						<Magnifier />
					</SearchBox>
					<Collapse>
						<svg width="13" height="11" viewBox="0 0 13 11">
							<path d="M0 .5h13" stroke="#fff" />
							<path d="M6.5 2.5L12 9.5H1z" fill="#fff" />
						</svg>
					</Collapse>
				</Strip>
				<Ribbon>
					<Section $w={249}>
						<SectionBody $pl={188} $pt={12}>
							<RowList>
								<RibbonRow>Find Files</RibbonRow>
								<RibbonRow>Compare</RibbonRow>
							</RowList>
						</SectionBody>
						<SectionLabel>FILE</SectionLabel>
					</Section>
					<Section $w={258}>
						<SectionBody>
							<BigBtn $w={50}>
								<BigIcon><ImportIcon /></BigIcon>
								Import
								<br />
								Data
							</BigBtn>
							<BigBtn $w={68}>
								<BigIcon><SaveIcon /></BigIcon>
								Save
								<br />
								Workspace
							</BigBtn>
							<RowList $ml={6}>
								<RibbonRow><RowIcon><NewVar /></RowIcon>New Variable</RibbonRow>
								<RibbonRow><RowIcon><OpenVar /></RowIcon>Open Variable<Caret $ml={6} /></RibbonRow>
								<RibbonRow><RowIcon><ClearVar /></RowIcon>Clear Workspace<Caret $ml={11} /></RibbonRow>
							</RowList>
						</SectionBody>
						<SectionLabel>VARIABLE</SectionLabel>
					</Section>
					<Section $w={144}>
						<SectionBody $pl={7}>
							<RowList>
								<RibbonRow><RowIcon><Analyze /></RowIcon>Analyze Code</RibbonRow>
								<RibbonRow><RowIcon><RunTime /></RowIcon>Run and Time</RibbonRow>
								<RibbonRow><RowIcon><ClearCmd /></RowIcon>Clear Commands<Caret $ml={10} /></RibbonRow>
							</RowList>
						</SectionBody>
						<SectionLabel>CODE</SectionLabel>
					</Section>
					<Section $w={62}>
						<SectionBody>
							<BigBtn $w={61}>
								<BigIcon><SimulinkIcon /></BigIcon>
								Simulink
								<br />
								Library
							</BigBtn>
						</SectionBody>
						<SectionLabel>SIMULINK</SectionLabel>
					</Section>
					<MenuSection $w={90}>
						ENVIRONMENT
						<Caret $s={6} />
					</MenuSection>
					<MenuSection $w={70}>
						RESOURCES
						<Caret $s={6} />
					</MenuSection>
				</Ribbon>
				<PathBar>
					<PathText>Users</PathText>
					<PathArrow />
					<PathText>peter</PathText>
					<PathArrow />
					<PathText>Documents</PathText>
					<PathArrow />
					<PathText>MATLAB</PathText>
					<Caret $auto />
					<PathSearch><Magnifier /></PathSearch>
				</PathBar>
				<Desk>
					<LeftColumn>
						<Panel $h={256}>
							<PanelHead>
								<span />
								<PanelArrow />
							</PanelHead>
							<FolderList>
								<ListHead />
							</FolderList>
							<ScrollEnd><Chevron d="M1 6l3.5-4L8 6" c="#666" s={11} /></ScrollEnd>
						</Panel>
						<Panel $h={123}>
							<PanelHead $h={17}>
								<span />
								<PanelArrow />
							</PanelHead>
							<VarTable>
								<VarHead>Value</VarHead>
								<VarRow $italic $pl={202}>double</VarRow>
								<VarRow $italic $pl={202}>Bar</VarRow>
								<VarRow $pl={180} $fs={11.9}>[58,55,52,57,49,45,6,20]</VarRow>
								<VarScroll>
									<VarThumb />
									<Chevron d="M3 1l4 3.5L3 8" c="#555" />
								</VarScroll>
							</VarTable>
						</Panel>
					</LeftColumn>
					<CommandPanel>
						<PanelHead $h={21}>
							Command Window
							<PanelArrow />
						</PanelHead>
						<CommandBody>
							<Gutter>
								<FxMark>fx<FxCaret /></FxMark>
							</Gutter>
							<Console>
								<Line>&gt;&gt; <Comment>%<Han>作業四</Han><Tight $by={-4}>_</Tight><Han>王麒淞</Han><Tight $by={-4}>_</Tight>104328031</Comment></Line>
								<Line>&gt;&gt; x = [ 58,55,52,57,49,45,6,20 ];</Line>
								<Line>&gt;&gt; a = diag(x);</Line>
								<Line>&gt;&gt; b = bar(a,<Str>'stack'</Str>);</Line>
								<Line>&gt;&gt; set(gca, <Str>'xticklabel'</Str>, {'{'}<Str>'<Han>大一</Han>'</Str>,<Str>'<Han>大二</Han>'</Str>,<Str>'<Han>大三</Han>'</Str>,<Tight> </Tight><Str>'<Han>大四</Han>'</Str>,<Tight> </Tight><Str>'<Han>碩一</Han>'</Str>,<Tight> </Tight><Str>'<Han>碩二</Han>'</Str>,<Tight> </Tight><Str>'<Han>博士</Han>'</Str>,<Tight> </Tight><Str>'<Han>教職人員</Han>'</Str>{'}'});</Line>
								<Line>&gt;&gt; ylabel(<Str>'<Han>人數</Han>'</Str>);</Line>
								<Line>&gt;&gt; title([<Str>'2014<Han>年資工系人員組成長條圖</Han>'</Str>]);</Line>
								<Line>&gt;&gt;</Line>
							</Console>
						</CommandBody>
					</CommandPanel>
				</Desk>
				<StatusBar>
					<svg width="10" height="10" viewBox="0 0 10 10">
						<path d="M8 1h1v1H8zM5 4h1v1H5zM8 4h1v1H8zM2 7h1v1H2zM5 7h1v1H5zM8 7h1v1H8z" fill="#888" />
					</svg>
				</StatusBar>
			</MatlabWindow>

			<FigureWindow>
				<FigTitle>
					<FigIcon><MatlabPeak s={12} /></FigIcon>
					Figure 1
					<FigButtons>
						<WinBtn><MinGlyph c="#fff" /></WinBtn>
						<WinBtn><MaxGlyph c="#fff" /></WinBtn>
						<WinBtn><CloseGlyph c="#fff" /></WinBtn>
					</FigButtons>
				</FigTitle>
				<MenuBar>
					<span>File</span>
					<span>Edit</span>
					<span>View</span>
					<span>Insert</span>
					<span>Tools</span>
					<span>Desktop</span>
					<span>Window</span>
					<span>Help</span>
					<MenuEnd>
						<svg width="8" height="8" viewBox="0 0 8 8">
							<path d="M0 1h4l3 3V7L4 4H0z" fill="#222" />
						</svg>
					</MenuEnd>
				</MenuBar>
				<FigTools>
					<ToolBtn><FigTool.New /></ToolBtn>
					<ToolBtn><FigTool.Open /></ToolBtn>
					<ToolBtn><FigTool.Save /></ToolBtn>
					<ToolBtn><FigTool.Print /></ToolBtn>
					<ToolSep />
					<ToolBtn><FigTool.Pointer /></ToolBtn>
					<ToolSep $r={3} $l={3} />
					<ToolBtn><Lens sign="+" /></ToolBtn>
					<ToolBtn><Lens sign="-" /></ToolBtn>
					<ToolBtn><FigTool.Hand /></ToolBtn>
					<ToolBtn><FigTool.Rotate /></ToolBtn>
					<ToolBtn><FigTool.Cursor /></ToolBtn>
					<ToolBtn><FigTool.Brush /></ToolBtn>
					<Caret $ml={4} $s={3} />
					<ToolSep $l={5} $r={3} />
					<ToolBtn><FigTool.Link /></ToolBtn>
					<ToolSep />
					<ToolBtn><FigTool.Colorbar /></ToolBtn>
					<ToolBtn><FigTool.Legend /></ToolBtn>
					<ToolSep />
					<ToolBtn><FigTool.Plain /></ToolBtn>
					<ToolBtn><FigTool.Tile /></ToolBtn>
				</FigTools>
				<Chart />
			</FigureWindow>
		</Page>
	);
};

export default App;
